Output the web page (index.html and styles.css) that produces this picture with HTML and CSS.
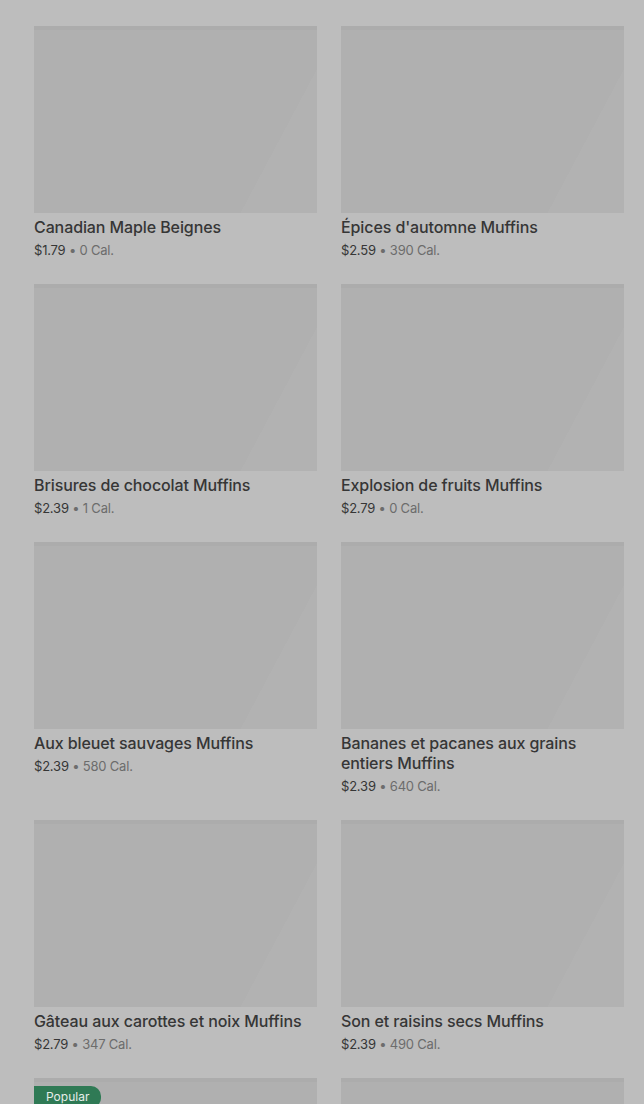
FILE: index.html
```html
<!DOCTYPE html>
<html lang="fr">
<head>
<meta charset="utf-8">
<title>Menu</title>
<link rel="stylesheet" href="styles.css">
</head>
<body>
<main class="grid">
  <article class="card">
    <div class="thumb"></div>
    <h3 class="title">Canadian Maple Beignes</h3>
    <p class="meta"><span class="price">$1.79</span> • <span class="cal">0 Cal.</span></p>
  </article>
  <article class="card">
    <div class="thumb"></div>
    <h3 class="title">Épices d'automne Muffins</h3>
    <p class="meta"><span class="price">$2.59</span> • <span class="cal">390 Cal.</span></p>
  </article>
  <article class="card">
    <div class="thumb"></div>
    <h3 class="title">Brisures de chocolat Muffins</h3>
    <p class="meta"><span class="price">$2.39</span> • <span class="cal">1 Cal.</span></p>
  </article>
  <article class="card">
    <div class="thumb"></div>
    <h3 class="title">Explosion de fruits Muffins</h3>
    <p class="meta"><span class="price">$2.79</span> • <span class="cal">0 Cal.</span></p>
  </article>
  <article class="card">
    <div class="thumb"></div>
    <h3 class="title">Aux bleuet sauvages Muffins</h3>
    <p class="meta"><span class="price">$2.39</span> • <span class="cal">580 Cal.</span></p>
  </article>
  <article class="card">
    <div class="thumb"></div>
    <h3 class="title">Bananes et pacanes aux grains entiers Muffins</h3>
    <p class="meta"><span class="price">$2.39</span> • <span class="cal">640 Cal.</span></p>
  </article>
  <article class="card">
    <div class="thumb"></div>
    <h3 class="title">Gâteau aux carottes et noix Muffins</h3>
    <p class="meta"><span class="price">$2.79</span> • <span class="cal">347 Cal.</span></p>
  </article>
  <article class="card">
    <div class="thumb"></div>
    <h3 class="title">Son et raisins secs Muffins</h3>
    <p class="meta"><span class="price">$2.39</span> • <span class="cal">490 Cal.</span></p>
  </article>
  <article class="card">
    <div class="thumb"><span class="badge">Popular</span></div>
  </article>
  <article class="card">
    <div class="thumb"></div>
  </article>
</main>
</body>
</html>
```
FILE: styles.css
```css
html, body {
  margin: 0;
  padding: 0;
  background: #bdbdbd;
}
body {
  font-family: Inter, "Noto Sans", sans-serif;
  color: #353535;
  overflow: hidden;
  height: 1104px;
}
.grid {
  display: grid;
  grid-template-columns: 283px 283px;
  column-gap: 24px;
  row-gap: 24px;
  padding: 26px 20px 0 34px;
}
.card {
  display: flex;
  flex-direction: column;
}
.thumb {
  position: relative;
  height: 187px;
  background: linear-gradient(118deg, #b0b0b0 80%, #b2b2b2 80%);
  box-shadow: inset 0 4px 0 rgba(0,0,0,0.02);
  margin-bottom: 4px;
}
.title {
  margin: 0;
  font-size: 16px;
  line-height: 20px;
  font-weight: 500;
  letter-spacing: -0.1px;
  color: #363636;
}
.meta {
  margin: 3px 0 0;
  font-size: 13px;
  line-height: 20px;
  letter-spacing: -0.2px;
  color: #6c6c6c;
}
.price {
  color: #363636;
}
.badge {
  position: absolute;
  left: 0;
  top: 8px;
  background: #2f7a55;
  color: #e6ede9;
  font-size: 12px;
  line-height: 22px;
  padding: 0 12px;
  border-radius: 0 10px 10px 0;
}
```
